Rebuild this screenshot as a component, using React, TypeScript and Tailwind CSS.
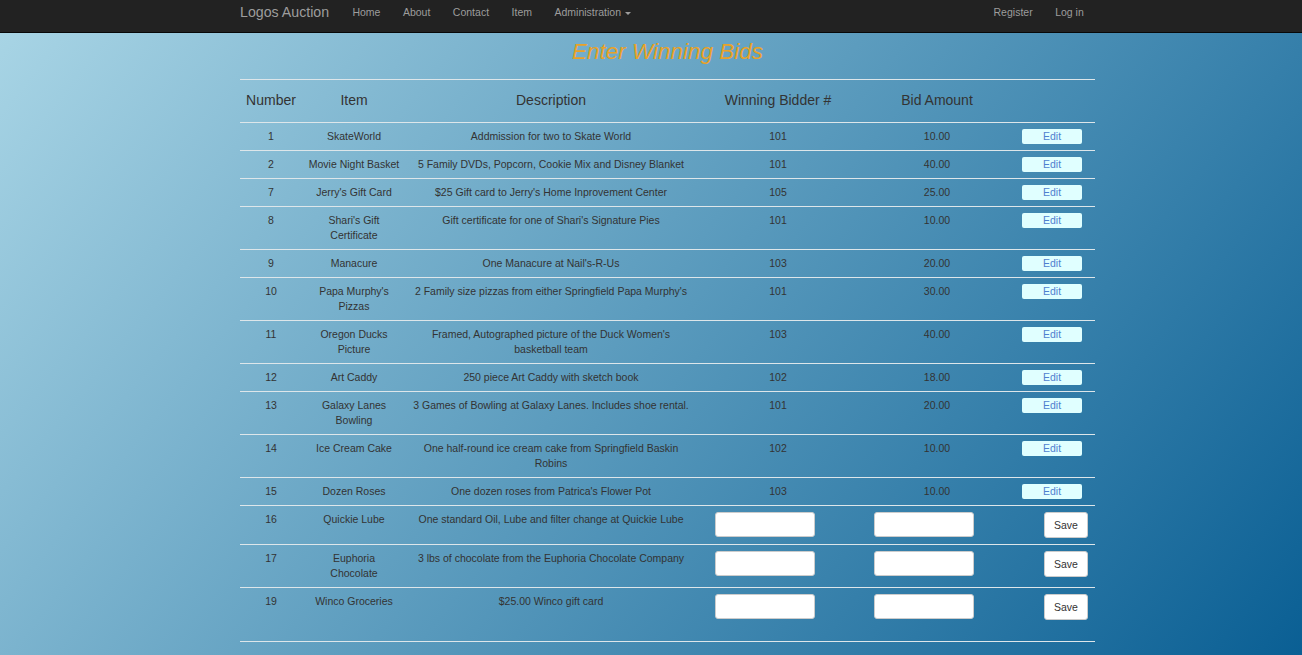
import React from 'react'

type Row = {
  num: string
  item: string[]
  desc: string[]
  bidder?: string
  amount?: string
}

const rows: Row[] = [
  { num: '1', item: ['SkateWorld'], desc: ['Addmission for two to Skate World'], bidder: '101', amount: '10.00' },
  { num: '2', item: ['Movie Night Basket'], desc: ['5 Family DVDs, Popcorn, Cookie Mix and Disney Blanket'], bidder: '101', amount: '40.00' },
  { num: '7', item: ["Jerry's Gift Card"], desc: ["$25 Gift card to Jerry's Home Inprovement Center"], bidder: '105', amount: '25.00' },
  { num: '8', item: ["Shari's Gift", 'Certificate'], desc: ["Gift certificate for one of Shari's Signature Pies"], bidder: '101', amount: '10.00' },
  { num: '9', item: ['Manacure'], desc: ["One Manacure at Nail's-R-Us"], bidder: '103', amount: '20.00' },
  { num: '10', item: ["Papa Murphy's", 'Pizzas'], desc: ["2 Family size pizzas from either Springfield Papa Murphy's"], bidder: '101', amount: '30.00' },
  { num: '11', item: ['Oregon Ducks', 'Picture'], desc: ["Framed, Autographed picture of the Duck Women's", 'basketball team'], bidder: '103', amount: '40.00' },
  { num: '12', item: ['Art Caddy'], desc: ['250 piece Art Caddy with sketch book'], bidder: '102', amount: '18.00' },
  { num: '13', item: ['Galaxy Lanes', 'Bowling'], desc: ['3 Games of Bowling at Galaxy Lanes. Includes shoe rental.'], bidder: '101', amount: '20.00' },
  { num: '14', item: ['Ice Cream Cake'], desc: ['One half-round ice cream cake from Springfield Baskin', 'Robins'], bidder: '102', amount: '10.00' },
  { num: '15', item: ['Dozen Roses'], desc: ["One dozen roses from Patrica's Flower Pot"], bidder: '103', amount: '10.00' },
  { num: '16', item: ['Quickie Lube'], desc: ['One standard Oil, Lube and filter change at Quickie Lube'] },
  { num: '17', item: ['Euphoria', 'Chocolate'], desc: ['3 lbs of chocolate from the Euphoria Chocolate Company'] },
  { num: '19', item: ['Winco Groceries'], desc: ['$25.00 Winco gift card'] },
]

const cols = 'grid grid-cols-[62px_104px_290px_164px_154px_81px]'

function Lines({ lines }: { lines: string[] }) {
  return (
    <>
      {lines.map((l, i) => (
        <div key={i} className="whitespace-nowrap">
          {l}
        </div>
      ))}
    </>
  )
}

export default function App() {
  return (
    <div className="min-h-[655px] bg-[linear-gradient(129deg,#aad6e6,#0a5f94)] font-['Liberation_Sans',Arial,sans-serif]">
      {/* Navbar */}
      <nav className="h-[33px] border-b border-[#080808] bg-[#222]">
        <div className="ml-[240px] flex w-[855px] items-start justify-between leading-[25px] text-[#9d9d9d]">
          <div className="flex items-start">
            <span className="pr-[12px] text-[14.2px]">Logos Auction</span>
            <div className="flex text-[10.5px]">
              <span className="px-[11.25px]">Home</span>
              <span className="px-[11.25px]">About</span>
              <span className="px-[11.25px]">Contact</span>
              <span className="px-[11.25px]">Item</span>
              <span className="px-[11.25px]">
                Administration
                <span className="ml-[4px] inline-block h-0 w-0 border-x-[3px] border-t-[3px] border-x-transparent border-t-current align-middle" />
              </span>
            </div>
          </div>
          <div className="flex text-[10.5px]">
            <span className="px-[11.25px]">Register</span>
            <span className="px-[11.25px]">Log in</span>
          </div>
        </div>
      </nav>

      <div className="ml-[240px] w-[855px]">
        <h2 className="pt-[6px] text-center text-[22.5px] italic leading-[25px] text-[#e9a227]">
          Enter Winning Bids
        </h2>

        <div className="mt-[15px] border-t border-[#dde6ea]">
          {/* Header */}
          <div className={`${cols} border-b border-[#dde6ea] pb-[12px] pt-[10px] text-center text-[14px] leading-[20px] text-[#333]`}>
            <div>Number</div>
            <div>Item</div>
            <div>Description</div>
            <div>Winning Bidder #</div>
            <div>Bid Amount</div>
            <div />
          </div>

          {rows.map((r, i) => {
            const last = i === rows.length - 1
            return (
              <div
                key={r.num}
                className={`${cols} border-b border-[#dde6ea] pt-[6px] text-center text-[10.5px] leading-[15px] text-[#333] ${last ? 'pb-[21px]' : 'pb-[6px]'}`}
              >
                <div>{r.num}</div>
                <div>
                  <Lines lines={r.item} />
                </div>
                <div>
                  <Lines lines={r.desc} />
                </div>
                {r.bidder ? (
                  <>
                    <div>{r.bidder}</div>
                    <div>{r.amount}</div>
                    <div className="text-left">
                      <button className="ml-[8px] h-[15px] w-[60px] rounded-[2px] bg-[#e0ffff] text-[10.5px] leading-[15px] text-[#4f7fcf]">
                        Edit
                      </button>
                    </div>
                  </>
                ) : (
                  <>
                    <div className="text-left">
                      <input className="ml-[19px] h-[25px] w-[100px] rounded-[3px] border border-[#ccc] bg-white" />
                    </div>
                    <div className="text-left">
                      <input className="ml-[14px] h-[25px] w-[100px] rounded-[3px] border border-[#ccc] bg-white" />
                    </div>
                    <div className="text-left">
                      <button className="ml-[30px] h-[26px] w-[44px] rounded-[3px] border border-[#ccc] bg-white text-[10.5px] text-[#333]">
                        Save
                      </button>
                    </div>
                  </>
                )}
              </div>
            )
          })}
        </div>
      </div>
    </div>
  )
}
